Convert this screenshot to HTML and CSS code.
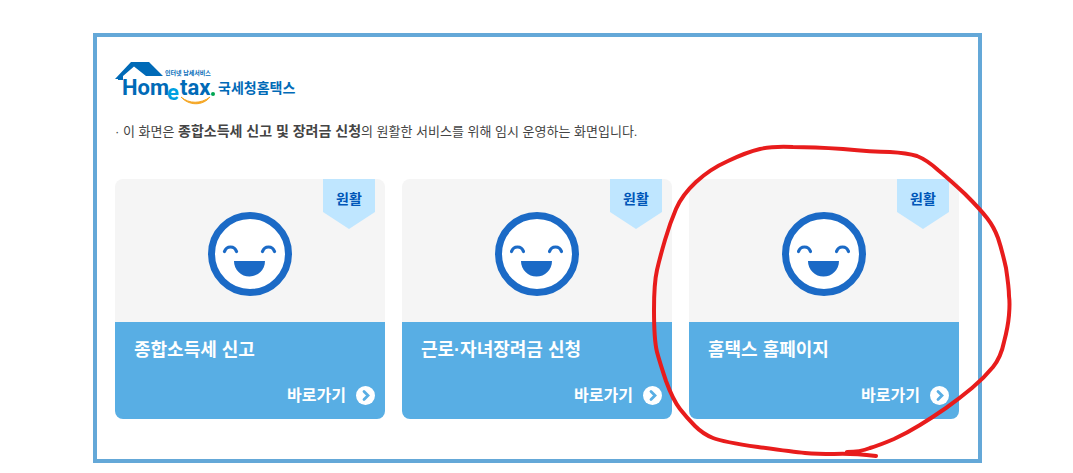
FILE: index.html
```html
<!DOCTYPE html>
<html lang="ko">
<head>
  <meta charset="UTF-8" />
  <meta name="viewport" content="width=device-width, initial-scale=1.0"/>
  <title>국세청홈택스</title>
  <link rel="stylesheet" href="styles.css">
</head>
<body>

  <!-- shared icons -->
  <svg class="symbols" aria-hidden="true">
    <symbol id="smile" viewBox="0 0 84 84">
      <circle cx="42" cy="42" r="38.5" fill="#fff" stroke="#1b6ac6" stroke-width="7"/>
      <path d="M16.5 39.5c2-6 10-6 12 0M54.5 39.5c2-6 10-6 12 0" fill="none" stroke="#1b6ac6" stroke-width="3.2" stroke-linecap="round"/>
      <path d="M26 49h31a15.5 15.5 0 0 1-31 0z" fill="#1b6ac6"/>
    </symbol>
    <symbol id="arrow" viewBox="0 0 19 19">
      <circle cx="9.5" cy="9.5" r="9.5" fill="#fff"/>
      <path d="M8 5.500l4 4-4 4" fill="none" stroke="#58aee4" stroke-width="2.8" stroke-linecap="round"/>
    </symbol>
  </svg>

  <main class="panel">
    <h1 class="logo">
      <svg viewBox="0 0 180 42" role="img" aria-label="Hometax 국세청홈택스">
        <path d="M0 17L16 0H34L48 14H31L19 4.5 8 14v4H3v-1z" fill="#006ab7"/>
        <text class="logo-en" x="7" y="33">Hom</text>
        <text class="logo-e" x="52" y="38">e</text>
        <text class="logo-en" x="65" y="33">tax</text>
        <circle cx="98" cy="32" r="2" fill="#00a651"/>
        <path d="M66 35c8 7 20 7 29 0-7 9-21 9-29 0z" fill="#f5a623" stroke="#f5a623"/>
        <text class="logo-sub" x="50" y="13">인터넷 납세서비스</text>
        <text class="logo-ko" x="103" y="31">국세청홈택스</text>
      </svg>
    </h1>

    <p class="notice">· 이 화면은 <strong>종합소득세 신고 및 장려금 신청</strong>의 원활한 서비스를 위해 임시 운영하는 화면입니다.</p>

    <div class="cards">
      <a href="#" class="card">
        <span class="status">
          <svg class="face"><use href="#smile"/></svg>
          <span class="badge">원활</span>
        </span>
        <span class="info">
          <span class="title">종합소득세 신고</span>
          <span class="go">바로가기 <svg class="arrow"><use href="#arrow"/></svg></span>
        </span>
      </a>
      <a href="#" class="card">
        <span class="status">
          <svg class="face"><use href="#smile"/></svg>
          <span class="badge">원활</span>
        </span>
        <span class="info">
          <span class="title">근로·자녀장려금 신청</span>
          <span class="go">바로가기 <svg class="arrow"><use href="#arrow"/></svg></span>
        </span>
      </a>
      <a href="#" class="card">
        <span class="status">
          <svg class="face"><use href="#smile"/></svg>
          <span class="badge">원활</span>
        </span>
        <span class="info">
          <span class="title">홈택스 홈페이지</span>
          <span class="go">바로가기 <svg class="arrow"><use href="#arrow"/></svg></span>
        </span>
        <!-- hand-drawn circle -->
        <svg class="marker" viewBox="650 140 364 320" aria-hidden="true">
          <path d="M847 452Q860 452 870 448Q880 445 894 439Q907 433 920 425Q933 417 946 408Q960 398 972 388Q984 378 993 367Q1001 357 1004 342Q1008 327 1009 315Q1010 303 1009 296Q1009 288 1006 268Q1002 250 998 238Q994 227 987 218Q980 209 965 194Q950 180 938 170Q927 160 917 156Q907 153 890 152Q873 152 843 149Q813 147 793 147Q773 146 760 149Q747 152 728 161Q710 169 696 182Q682 195 676 209Q670 223 665 240Q660 257 657 270Q654 283 654 310Q654 340 657 352Q660 363 666 381Q673 400 680 409Q687 418 695 426Q703 434 713 438Q723 442 758 447Q793 452 805 453Q817 454 834 454Q850 453 876 456"/>
        </svg>
      </a>
    </div>
  </main>

</body>
</html>
```

FILE: styles.css
```css
* {
  box-sizing: border-box;
}
body {
  margin: 0;
  font-family: "Liberation Sans", "Noto Sans CJK KR", sans-serif;
  background: #fff;
  color: #444;
}
.symbols {
  display: none;
}
.panel {
  margin: 33px 91px 10px 93px;
  padding: 25px 19px 40px 18px;
  border: 4px solid #64a8d8;
}
.logo {
  margin: 0;
}
.logo svg {
  display: block;
  width: 180px;
  height: 42px;
  overflow: visible;
}
.logo-en,
.logo-e {
  font-family: Roboto, sans-serif;
  font-size: 22px;
  font-weight: bold;
  fill: #006ab7;
}
.logo-e {
  fill: #00a0e0;
}
.logo-sub {
  font-size: 6px;
  font-weight: bold;
  fill: #006ab7;
}
.logo-ko {
  font-size: 14px;
  font-weight: bold;
  fill: #006ab7;
}
.notice {
  margin: 18px 0 37px;
  font-size: 13px;
  line-height: 20px;
}
.notice strong {
  font-size: 14px;
  line-height: 1;
}
.cards {
  display: grid;
  grid-template-columns: repeat(3, 1fr);
  gap: 17px;
}
.card {
  position: relative;
  display: block;
  color: #fff;
  text-decoration: none;
}
.status {
  display: flex;
  justify-content: center;
  padding: 33px 0 26px;
  border-radius: 8px 8px 0 0;
  background: #f5f5f5;
}
.face {
  width: 84px;
  height: 84px;
}
.badge {
  position: absolute;
  top: 0;
  right: 10px;
  width: 52px;
  height: 50px;
  padding-top: 10px;
  background: #bfe6ff;
  clip-path: polygon(0 0, 100% 0, 100% 66%, 50% 100%, 0 66%);
  color: #0056b8;
  font-size: 14px;
  font-weight: bold;
  line-height: 20px;
  text-align: center;
}
.info {
  display: flex;
  flex-direction: column;
  gap: 20px;
  padding: 14px 10px 12px 19px;
  border-radius: 0 0 8px 8px;
  background: #58aee4;
}
.title {
  font-size: 18px;
  font-weight: bold;
  line-height: 28px;
}
.go {
  display: flex;
  align-items: center;
  justify-content: flex-end;
  gap: 10px;
  font-size: 16px;
  font-weight: bold;
  line-height: 23px;
}
.arrow {
  width: 19px;
  height: 19px;
}
.marker {
  position: absolute;
  top: -39px;
  left: -39px;
  width: 364px;
  height: 320px;
  fill: none;
  stroke: #e81c1c;
  stroke-width: 4;
  stroke-linecap: round;
  stroke-linejoin: round;
  pointer-events: none;
}
```
